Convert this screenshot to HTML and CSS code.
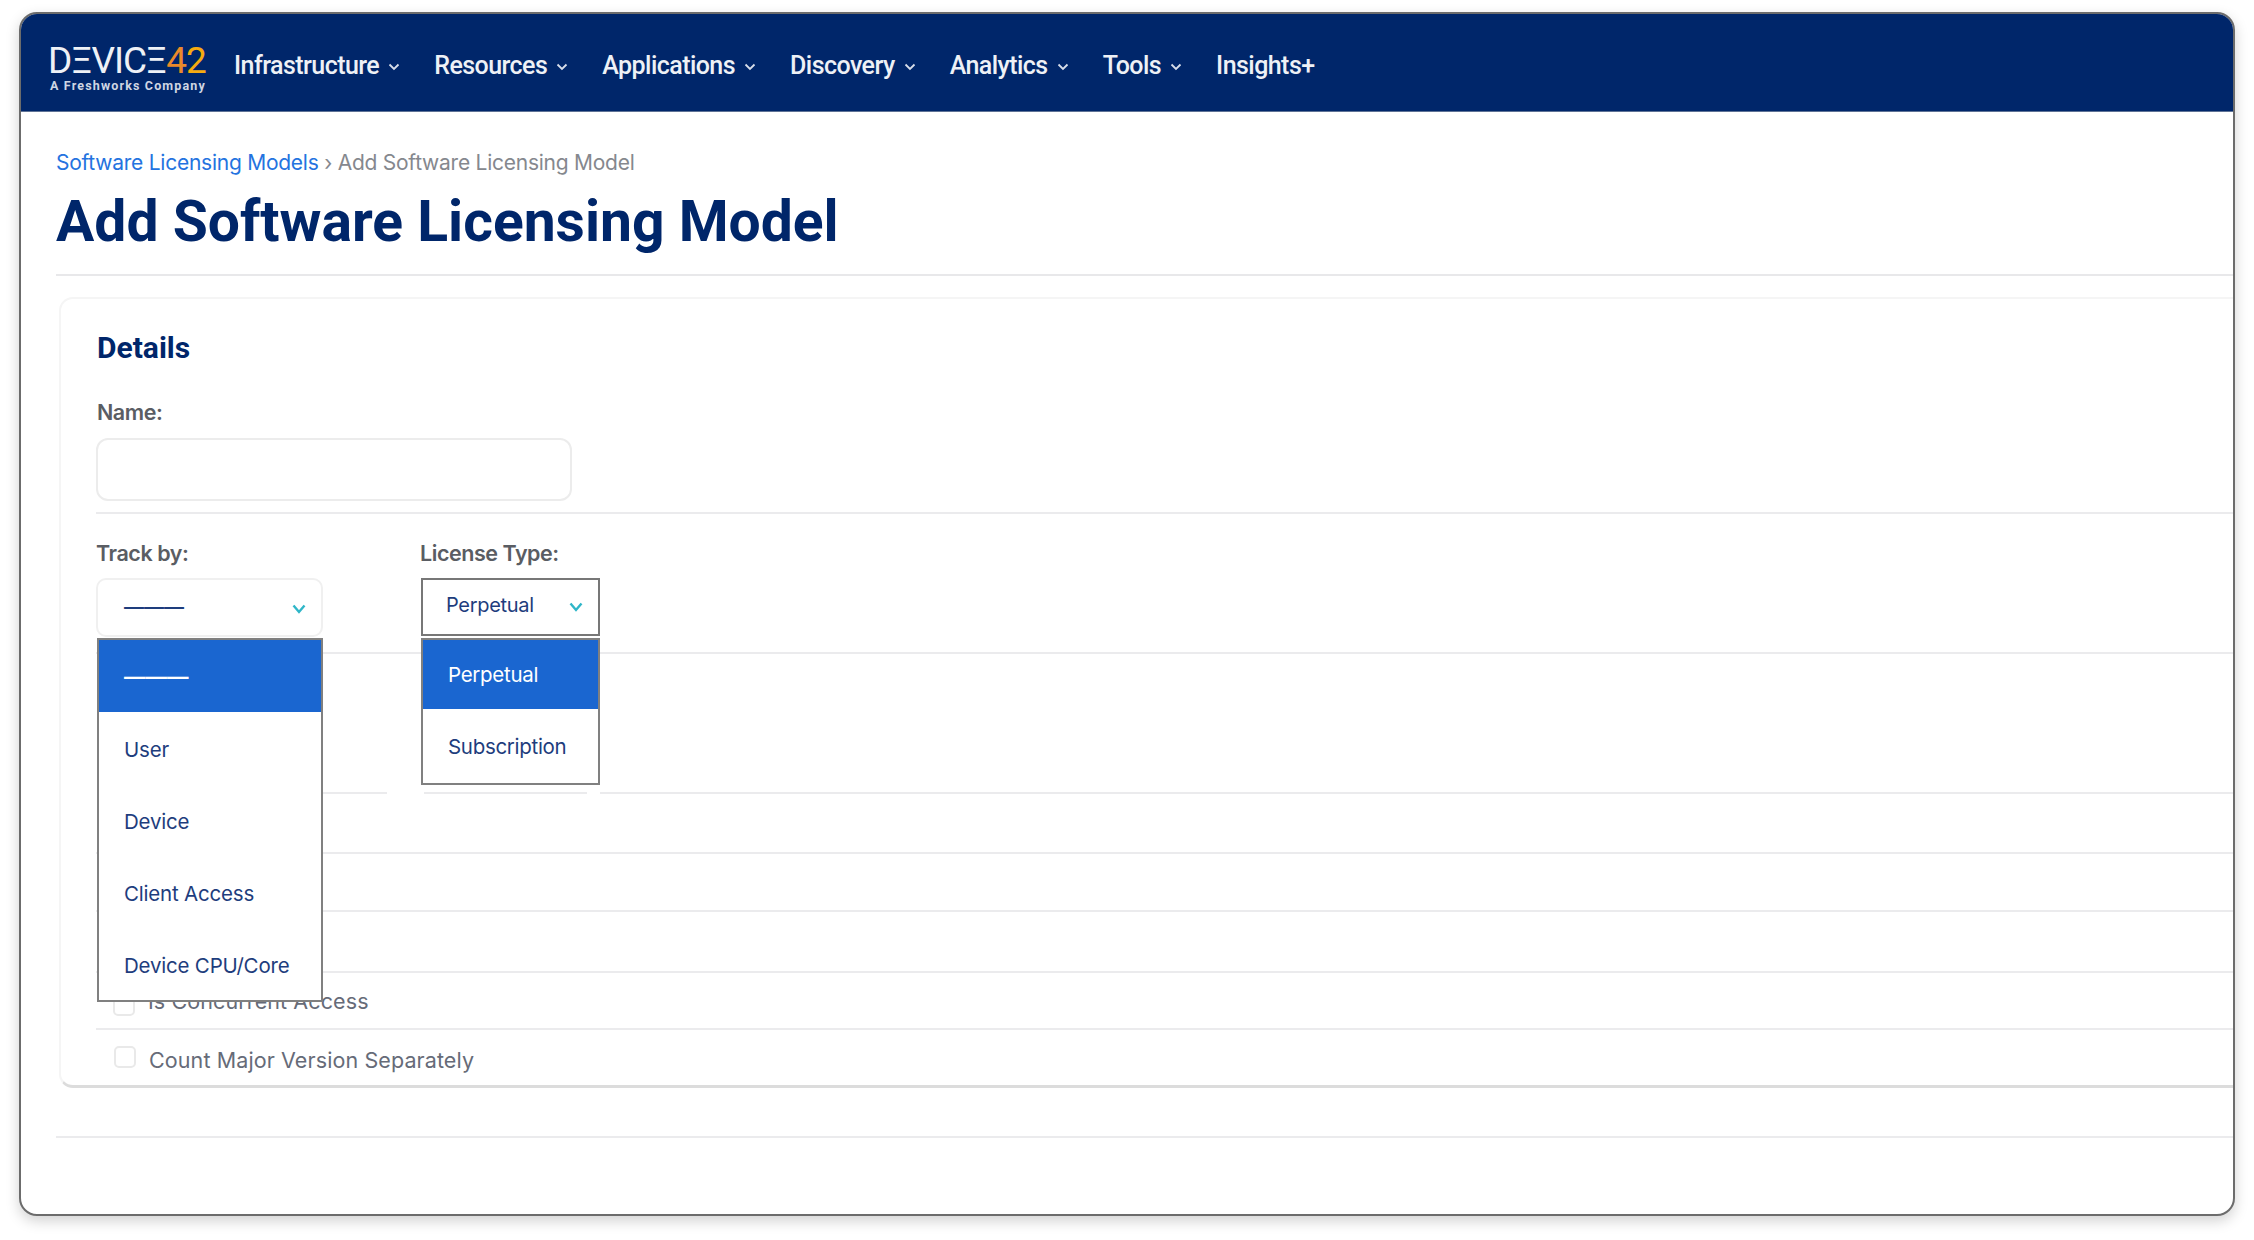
FILE: index.html
```html
<!DOCTYPE html>
<html lang="en">
<head>
<meta charset="utf-8">
<title>Add Software Licensing Model</title>
<link rel="stylesheet" href="styles.css">
</head>
<body>
<div class="window">
  <header class="nav">
    <div class="logo">
      <div class="logo-mark">DΞVICΞ<span class="four">4</span><span class="two">2</span></div>
      <div class="logo-sub">A Freshworks Company</div>
    </div>
    <nav class="menu">
      <a class="menu-item">Infrastructure <svg class="caret" viewBox="0 0 12 8"><path d="M1.500 1.500 6 6l4.500-4.500"/></svg></a>
      <a class="menu-item">Resources <svg class="caret" viewBox="0 0 12 8"><path d="M1.500 1.500 6 6l4.500-4.500"/></svg></a>
      <a class="menu-item">Applications <svg class="caret" viewBox="0 0 12 8"><path d="M1.500 1.500 6 6l4.500-4.500"/></svg></a>
      <a class="menu-item">Discovery <svg class="caret" viewBox="0 0 12 8"><path d="M1.500 1.500 6 6l4.500-4.500"/></svg></a>
      <a class="menu-item">Analytics <svg class="caret" viewBox="0 0 12 8"><path d="M1.500 1.500 6 6l4.500-4.500"/></svg></a>
      <a class="menu-item">Tools <svg class="caret" viewBox="0 0 12 8"><path d="M1.500 1.500 6 6l4.500-4.500"/></svg></a>
      <a class="menu-item">Insights+</a>
    </nav>
  </header>
  <main class="main">
    <div class="crumbs"><a class="crumb-link">Software Licensing Models</a> <span class="crumb-sep">›</span> Add Software Licensing Model</div>
    <h1 class="title">Add Software Licensing Model</h1>
    <section class="card">
      <div class="row row-details">
        <h2 class="card-title">Details</h2>
        <label class="label">Name:</label>
        <div class="input"></div>
      </div>
      <div class="row row-selects">
        <div class="col col-track">
          <label class="label">Track by:</label>
          <div class="select select-round">
            <span class="dash">———</span>
            <svg class="chev" viewBox="0 0 14 10"><path d="M1.500 1.500 7 8l5.500-6.500"/></svg>
          </div>
          <ul class="list list-track">
            <li class="opt sel"><span class="dash">———</span></li>
            <li class="opt">User</li>
            <li class="opt">Device</li>
            <li class="opt">Client Access</li>
            <li class="opt">Device CPU/Core</li>
          </ul>
        </div>
        <div class="col col-license">
          <label class="label">License Type:</label>
          <div class="select select-open">
            <span>Perpetual</span>
            <svg class="chev" viewBox="0 0 14 10"><path d="M1.500 1.500 7 8l5.500-6.500"/></svg>
          </div>
          <ul class="list list-license">
            <li class="opt sel">Perpetual</li>
            <li class="opt">Subscription</li>
          </ul>
        </div>
      </div>
      <div class="row-gap">
        <div class="segments">
          <i class="seg seg-a"></i><i class="seg seg-b"></i><i class="seg seg-c"></i>
        </div>
      </div>
      <div class="row row-h60"></div>
      <div class="row row-h58"></div>
      <div class="row row-h61"></div>
      <div class="row row-check row-h57">
        <span class="box box-behind"></span><span class="check-text">Is Concurrent Access</span>
      </div>
      <div class="row-last row-check">
        <span class="box"></span><span class="check-text">Count Major Version Separately</span>
      </div>
    </section>
    <div class="foot-rule"></div>
  </main>
</div>
</body>
</html>
```
FILE: styles.css
```css
* { box-sizing: border-box; }
html, body { margin: 0; padding: 0; background: #fff; }
body { padding: 12px 19px 0; height: 1240px; overflow: hidden; font-family: Inter, "Liberation Sans", sans-serif; }

.window {
  width: 2216px;
  height: 1204px;
  border: 2px solid #6c6c6c;
  border-radius: 18px;
  overflow: hidden;
  background: #fff;
  box-shadow: 0 5px 14px rgba(0, 0, 0, .18);
}

.nav {
  height: 98px;
  background: #00266a;
  display: flex;
  align-items: center;
  padding: 6px 0 0 27px;
  border-bottom: 1px solid #5f7396;
}
.logo { width: 186px; flex: none; color: #eef1f6; padding-top: 4px; }
.logo-mark {
  font-family: Roboto, sans-serif;
  font-weight: 400;
  font-size: 37px;
  line-height: 35px;
  letter-spacing: -1px;
  white-space: nowrap;
}
.four { color: #ea8a2a; }
.two { color: #f6ab10; }
.logo-sub {
  font-family: Roboto, sans-serif;
  font-weight: 700;
  font-size: 12.500px;
  line-height: 15px;
  margin-left: 2px;
  color: #cfd6e3;
  letter-spacing: 1.150px;
  white-space: nowrap;
}
.menu { display: flex; gap: 34px; }
.menu-item {
  display: flex;
  align-items: center;
  gap: 9px;
  color: #eef1f6;
  font-family: Roboto, sans-serif;
  font-weight: 500;
  font-size: 25px;
  line-height: 32px;
  letter-spacing: -.55px;
  white-space: nowrap;
}
.caret { width: 12px; height: 8px; margin-top: 3px; fill: none; stroke: #d8deea; stroke-width: 1.800; }

.main { padding: 36px 0 0 35px; }
.crumbs { font-size: 21px; line-height: 30px; color: #85888e; white-space: nowrap; letter-spacing: -.25px; }
.crumb-link { color: #2473e0; }
.crumb-sep { color: #85888e; }
.title {
  margin: 0;
  padding: 6px 0 0;
  height: 98px;
  font-family: Roboto, sans-serif;
  font-weight: 700;
  font-size: 57px;
  line-height: 76px;
  color: #00266a;
  border-bottom: 2px solid #e8e8ea;
  white-space: nowrap;
}

.card {
  margin: 21px -20px 0 3px;
  height: 791px;
  border: 2px solid #f5f5f5;
  border-bottom: 3px solid #dcdcdc;
  border-radius: 14px;
  padding-left: 35px;
}
.row { border-bottom: 2px solid #ebebed; }
.row-details { height: 215px; padding-top: 29px; }
.card-title {
  margin: 0 0 31px 1px;
  font-family: Roboto, sans-serif;
  font-weight: 700;
  font-size: 30px;
  line-height: 40px;
  color: #00266a;
}
.label {
  display: block;
  height: 30px;
  font-size: 21.500px;
  line-height: 30px;
  font-weight: 600;
  color: #5a5d63;
  letter-spacing: -.45px;
}
.row-details .label { margin-left: 1px; height: 26px; line-height: 26px; margin-bottom: 13px; }
.input { width: 476px; height: 63px; border: 2px solid #ececec; border-radius: 12px; background: #fff; }

.row-selects { height: 140px; padding-top: 24px; display: flex; gap: 97px; }
.col { position: relative; }
.col-track { width: 227px; }
.col-license { width: 180px; }
.col .label { height: 30px; margin-bottom: 10px; }
.select {
  display: flex;
  align-items: center;
  justify-content: space-between;
  background: #fff;
  color: #1e3d7d;
  font-size: 20px;
  letter-spacing: -.3px;
}
.select-round { height: 59px; border: 2px solid #f0f0f0; border-radius: 10px; padding: 0 15px 2px 26px; }
.select-open { height: 58px; margin-top: 4px; margin-left: 1px; border: 2px solid #777; padding: 0 15px 4px 23px; }
.chev { width: 14px; height: 10px; fill: none; stroke: #2fb6c8; stroke-width: 2.400; margin-top: 4px; }
.dash { font-family: "Liberation Sans", sans-serif; font-size: 20px; font-weight: 700; letter-spacing: 0; color: inherit; }
.list .dash { font-size: 21.500px; }

.list {
  position: absolute;
  margin: 0;
  padding: 0;
  list-style: none;
  background: #fff;
  border: 2px solid #808080;
  z-index: 2;
  color: #1e3d7d;
  font-size: 20.500px;
  letter-spacing: -.2px;
}
.opt { display: flex; align-items: center; padding-left: 25px; height: 72px; }
.opt.sel { background: #1a66d0; color: #fff; }
.list-track { left: 1px; top: 100px; width: 226px; }
.list-track .opt { padding-top: 2px; }
.list-license { left: 1px; top: 100px; width: 179px; }
.list-license .opt { height: 74px; letter-spacing: -.3px; }
.list-license .opt.sel { height: 69px; }

.row-gap { height: 140px; display: flex; align-items: flex-end; }
.segments { display: flex; width: 100%; height: 2px; padding-left: 226px; }
.seg { display: block; height: 2px; background: #ebebed; }
.seg-a { width: 65px; margin-right: 37px; }
.seg-b { width: 163px; margin-right: 13px; }
.seg-c { flex: 1; }

.row-h60 { height: 60px; }
.row-h58 { height: 58px; }
.row-h61 { height: 61px; }
.row-h57 { height: 57px; }
.row-check { display: flex; align-items: center; color: #666b78; }
.row-last { height: 56px; padding-top: 4px; }
.box { width: 22px; height: 22px; border: 2px solid #e9e9e9; border-radius: 5px; background: #fff; flex: none; margin: 0 13px 6px 18px; }
.box-behind { margin: 8px 13px 0 17px; }
.check-text { font-size: 21.500px; letter-spacing: .1px; white-space: nowrap; }

.foot-rule { height: 2px; margin-top: 48px; background: #ebebed; }
```
